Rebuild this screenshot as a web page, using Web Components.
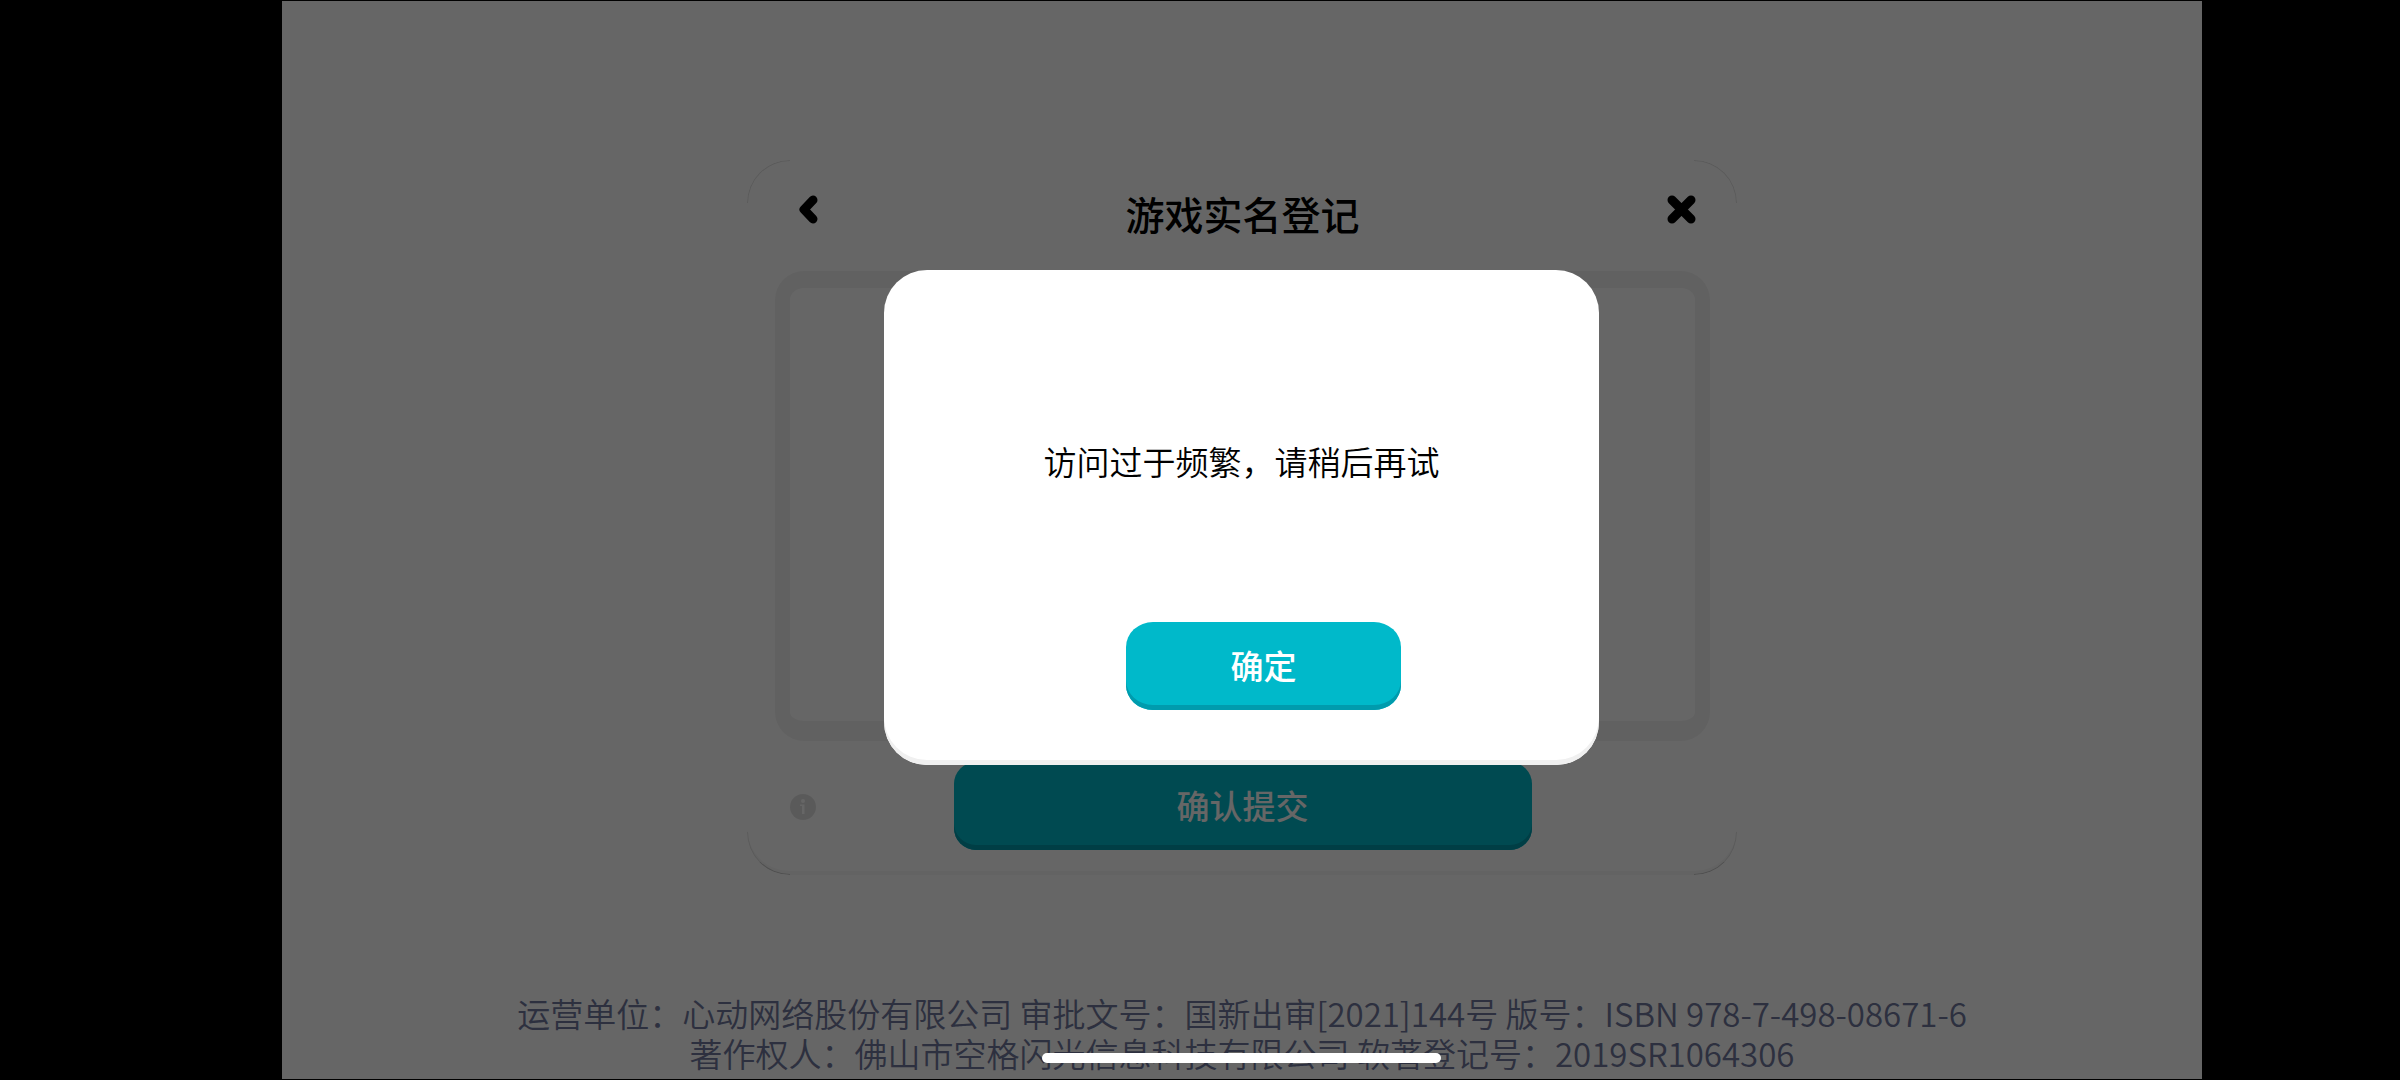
<!DOCTYPE html>
<html lang="zh-CN">
<head>
<meta charset="utf-8">
<title>游戏实名登记</title>
<style>
  body { margin: 0; background: #000; color: #000; font-family: "Noto Sans CJK SC", sans-serif; }
</style>
</head>
<body>
<game-screen>
  <real-name-panel slot="main" heading="游戏实名登记">
    <action-button slot="action" wide>确认提交</action-button>
  </real-name-panel>
  <legal-notice slot="footer">
    <span>运营单位：心动网络股份有限公司 审批文号：国新出审[2021]144号 版号：ISBN 978-7-498-08671-6</span>
    <span>著作权人：佛山市空格闪光信息科技有限公司 软著登记号：2019SR1064306</span>
  </legal-notice>
  <message-dialog slot="dialog">
    访问过于频繁，请稍后再试
    <action-button slot="action">确定</action-button>
  </message-dialog>
</game-screen>

<script>
const define = (name, html, setup) => {
  const template = document.createElement('template');
  template.innerHTML = html;
  customElements.define(name, class extends HTMLElement {
    constructor() {
      super();
      this.attachShadow({ mode: 'open' }).append(template.content.cloneNode(true));
    }
    connectedCallback() { if (setup) setup(this, this.shadowRoot); }
  });
};

define('action-button', `
<style>
  :host { display: block; width: 275px; }
  :host([wide]) { width: 578px; }
  button {
    box-sizing: border-box; display: block; width: 100%; height: 88px; margin: 0; padding: 0 0 2px;
    border: 0; border-radius: 27px / 25px;
    background: #00b9ca; box-shadow: inset 0 -5px #009bad;
    color: #fff; font: 500 33px/48px "Noto Sans CJK SC", sans-serif; cursor: pointer;
  }
  :host([wide]) button { border-radius: 22px; }
</style>
<button type="button"><slot></slot></button>`);

define('real-name-panel', `
<style>
  :host { display: block; width: 990px; }
  section {
    position: relative; box-sizing: border-box; height: 715px; padding: 0 27px 25px 28px;
    display: flex; flex-direction: column; border-radius: 43px; background: #fff;
    box-shadow: inset 0 -4px #f8f8f8;
  }
  section::before {
    content: ""; position: absolute; inset: 0; border-radius: 43px; pointer-events: none;
    border: 1px solid #e2e2e2; border-bottom-color: #c8c8c8;
    --c: linear-gradient(#000, #000);
    mask: var(--c) 0 0 / 43px 43px no-repeat, var(--c) 100% 0 / 43px 43px no-repeat,
          var(--c) 0 100% / 43px 43px no-repeat, var(--c) 100% 100% / 43px 43px no-repeat;
  }
  header {
    height: 111px; padding: 0 14px 0 24px;
    display: grid; grid-template-columns: 1fr auto 1fr;
  }
  h1 { margin: 0; font-size: 39px; line-height: 58px; font-weight: 500; padding: 24px 10px 0 0; }
  button { border: 0; background: none; padding: 0; margin: 0; cursor: pointer; }
  header button { height: 29px; margin-top: 35px; }
  header button:first-child { justify-self: start; }
  header button:last-child { justify-self: end; }
  svg { display: block; }
  .field {
    box-sizing: border-box; height: 470px; border: solid #f3f3f3; border-width: 17px 15px 20px;
    border-radius: 29px; background: #fff;
  }
  footer { flex: 1; display: grid; grid-template-columns: 1fr auto 1fr; align-items: end; }
  .info { width: 26px; height: 26px; margin: 0 0 30px 15px; }
</style>
<section>
  <header>
    <button type="button" aria-label="返回">
      <svg width="19" height="29" viewBox="0 0 19 29" fill="none" stroke="#000" stroke-width="9" stroke-linecap="round" stroke-linejoin="round"><path d="M14 5 L5 14.500 L14 24"/></svg>
    </button>
    <h1></h1>
    <button type="button" aria-label="关闭">
      <svg width="29" height="29" viewBox="0 0 29 29" fill="none" stroke="#000" stroke-width="9" stroke-linecap="round"><path d="M5 5 L24 24 M24 5 L5 24"/></svg>
    </button>
  </header>
  <div class="field"></div>
  <footer>
    <button class="info" type="button" aria-label="说明">
      <svg width="26" height="26" viewBox="0 0 26 26"><circle cx="13" cy="13" r="13" fill="#e2e2e2"/><circle cx="13" cy="7" r="2" fill="#fff"/><path d="M10 10.500H14.500V20H12V12H10Z" fill="#fff"/></svg>
    </button>
    <slot name="action"></slot>
  </footer>
</section>`, (host, root) => { root.querySelector('h1').textContent = host.getAttribute('heading'); });

define('legal-notice', `
<style>
  :host { display: flex; flex-direction: column; align-items: center; color: #70789e; font-size: 33px; line-height: 40px; font-weight: 350; text-align: center; }
</style>
<slot></slot>`);

define('message-dialog', `
<style>
  :host { display: block; width: 715px; margin-right: 1px; }
  div {
    box-sizing: border-box; height: 495px; padding: 0 0 55px;
    display: flex; flex-direction: column; align-items: center;
    border-radius: 43px; background: #fff; box-shadow: inset 0 -5px #f0f0f0;
  }
  p { flex: 1; margin: 0; padding-top: 167px; font-size: 33px; line-height: 48px; font-weight: 350; }
  .actions { padding-left: 44px; }
</style>
<div role="alertdialog" aria-modal="true">
  <p><slot></slot></p>
  <span class="actions"><slot name="action"></slot></span>
</div>`);

define('game-screen', `
<style>
  :host { display: grid; grid-template-columns: 282px minmax(0, 1fr) 198px; min-height: 100vh; }
  main {
    grid-column: 2; position: relative; box-sizing: border-box; padding-top: 159px;
    display: flex; flex-direction: column; align-items: center;
    background: #fff; border: solid #000; border-width: 1px 0;
  }
  .foot { margin-top: auto; padding-bottom: 6px; }
  .shade {
    position: absolute; inset: 0; box-sizing: border-box; padding-bottom: 45px;
    display: grid; place-items: center; background: rgba(0, 0, 0, .6);
  }
  .home {
    position: absolute; bottom: 16px; left: 50%; margin-left: -200px;
    width: 399px; height: 10px; border-radius: 5px; background: #fff;
  }
</style>
<main>
  <slot name="main"></slot>
  <div class="foot"><slot name="footer"></slot></div>
  <div class="shade"><slot name="dialog"></slot></div>
  <div class="home"></div>
</main>`);
</script>
</body>
</html>
